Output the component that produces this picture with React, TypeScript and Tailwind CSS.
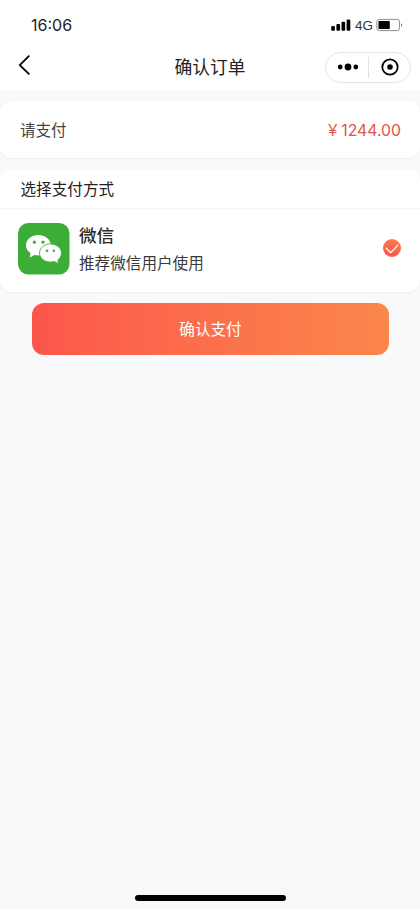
const fontSans = "font-['Liberation_Sans','Noto_Sans_CJK_SC',sans-serif]";

function StatusBar() {
    return (
        <div className="flex h-[45px] items-center justify-between pt-[5px] pl-[31px] pr-[17px]">
            <span className="font-['Inter','Liberation_Sans',sans-serif] text-[16px] leading-5 text-[#222]">16:06</span>
            <div className="flex items-center">
                <svg className="h-3 w-5" viewBox="0 0 20 12" fill="#000">
                    <rect x="0.2" y="7" width="3.7" height="4.8" rx="1.1" />
                    <rect x="5.4" y="5" width="3.7" height="6.8" rx="1.1" />
                    <rect x="10.5" y="2.8" width="3.7" height="9" rx="1.1" />
                    <rect x="15.6" y="0.6" width="3.7" height="11.2" rx="1.1" />
                </svg>
                <span className="ml-[4px] w-[21px] pt-px font-['Liberation_Sans',sans-serif] text-[13.5px] leading-5 text-[#333]">4G</span>
                <svg className="h-3.5 w-[27px]" viewBox="0 0 27 14">
                    <rect x="0.9" y="1.4" width="22.6" height="11.2" rx="2.4" fill="none" stroke="#8e8e8e" />
                    <rect x="2.5" y="3" width="11.3" height="8" rx="0.8" fill="#000" />
                    <path d="M25 5.2c1.4.5 1.4 3.1 0 3.6z" fill="#777" />
                </svg>
            </div>
        </div>
    );
}

function NavBar() {
    return (
        <div className="grid h-[45px] grid-cols-[1fr_auto_1fr] items-center px-[9px]">
            <svg className="mb-1.5 ml-[9px] h-5 w-3" viewBox="0 0 12 20" fill="none" stroke="#000" strokeWidth="1.8" strokeLinecap="round" strokeLinejoin="round">
                <path d="M10.8 1.2L1.8 10.2l9 8.7" />
            </svg>
            <h1 className="text-[17.8px] leading-6 text-[#222]">确认订单</h1>
            <div className="flex h-[31px] w-[86px] items-center justify-self-end rounded-full border border-[#e4e4e4]">
                <div className="flex flex-1 justify-center pb-px pl-0.5">
                    <svg className="h-2 w-[22px]" viewBox="0 0 22 8">
                        <circle cx="3.2" cy="4" r="2.4" />
                        <circle cx="11" cy="4" r="3.4" />
                        <circle cx="18.8" cy="4" r="2.4" />
                    </svg>
                </div>
                <div className="h-[21px] w-px bg-[#e2e2e2]" />
                <div className="flex flex-1 justify-center pb-[2px] pl-px">
                    <svg className="h-[18px] w-[18px]" viewBox="0 0 18 18">
                        <circle cx="9" cy="9" r="7.7" fill="none" stroke="#000" strokeWidth="1.8" />
                        <circle cx="9" cy="9" r="2.8" />
                    </svg>
                </div>
            </div>
        </div>
    );
}

function WechatIcon() {
    return (
        <svg className="mb-[2px] h-[52px] w-[52px]" viewBox="0 0 52 52">
            <rect width="51.5" height="51.5" rx="10.5" fill="#3cad36" />
            {/* big bubble */}
            <path d="M20.4 12C13.5 12 8 16.5 8 22.2c0 3.2 1.7 6 4.5 7.9l-.7 4.3 4.6-2.5c1.3.3 2.6.5 4 .5 6.9 0 12.4-4.5 12.4-10.2S27.3 12 20.4 12z" fill="#fff" />
            {/* small bubble */}
            <path d="M32.5 20.9c6.1 0 11 4.1 11 9.1 0 2.8-1.4 5.2-3.6 6.9l.7 3.9-4.2-2.2c-1.2.3-2.5.5-3.9.5-6.1 0-11-4.1-11-9.1s4.9-9.1 11-9.1z" fill="#fff" stroke="#3cad36" strokeWidth="0.9" />
            <g fill="#3cad36">
                <circle cx="16.4" cy="19.2" r="1.6" />
                <circle cx="25" cy="19.2" r="1.6" />
                <circle cx="29.1" cy="27.7" r="1.3" />
                <circle cx="35.8" cy="27.7" r="1.3" />
            </g>
        </svg>
    );
}

function CheckedIcon() {
    return (
        <svg className="mb-[4px] h-[18px] w-[18px]" viewBox="0 0 18 18" fill="none">
            <defs>
                <linearGradient id="checked" x1="0.65" y1="0" x2="0.35" y2="1">
                    <stop stopColor="#fc7d49" />
                    <stop offset="1" stopColor="#fa554a" />
                </linearGradient>
            </defs>
            <circle cx="9" cy="9" r="9" fill="url(#checked)" />
            <path d="M2.8 8.8l5 4.8 7.6-8" stroke="#fff" strokeWidth="1.3" />
        </svg>
    );
}

export default function App() {
    return (
        <div className={`flex h-[909px] w-[420px] flex-col overflow-hidden bg-[#f7f9fb] ${fontSans}`}>
            <header className="shrink-0 bg-white">
                <StatusBar />
                <NavBar />
            </header>

            <main className="flex-1">
                <section className="mt-[11px] flex h-[57px] items-center justify-between rounded-xl bg-white pt-0.5 pl-5 pr-[19px] shadow-[0_1px_1px_rgba(60,80,100,0.05)]">
                    <span className="text-[15.5px] text-[#444]">请支付</span>
                    <span className="flex items-center text-[#de5549]">
                        <span className="mr-[4px] font-['Liberation_Sans',sans-serif] text-[16px]">¥</span>
                        <span className="font-['Inter','Liberation_Sans',sans-serif] text-[15.8px]">1244.00</span>
                    </span>
                </section>

                <section className="mt-[11px] h-[123px] rounded-xl bg-white shadow-[0_1px_1px_rgba(60,80,100,0.05)]">
                    <h2 className="h-10 border-b border-[#f6f6f7] pt-px pl-[20.5px] text-[15.6px] leading-10 text-[#222]">选择支付方式</h2>
                    <div className="flex items-center pt-[13px] pl-[18px] pr-[19px]">
                        <WechatIcon />
                        <div className="ml-[9px] flex-1">
                            <div className="text-[17.6px] leading-7 font-medium text-[#2a2a2a]">微信</div>
                            <div className="pt-px text-[15.6px] leading-[26px] text-[#3a3a3a]">推荐微信用户使用</div>
                        </div>
                        <CheckedIcon />
                    </div>
                </section>

                <button className="mt-[11px] ml-8 block h-[52px] w-[357px] rounded-xl bg-linear-to-r from-[#fb564b] to-[#fb864a] pt-0.5 text-[15.6px] text-white">
                    确认支付
                </button>
            </main>

            <footer className="flex shrink-0 justify-center pb-2">
                <div className="h-1.5 w-[151px] rounded-full bg-black" />
            </footer>
        </div>
    );
}
